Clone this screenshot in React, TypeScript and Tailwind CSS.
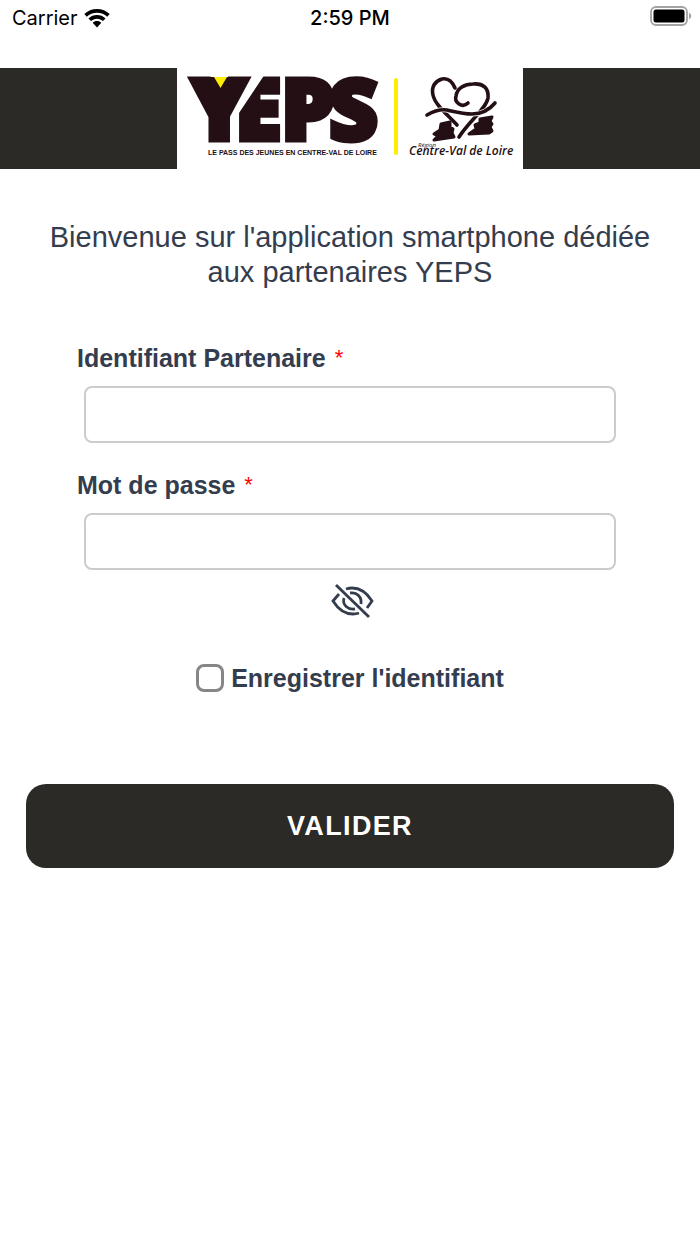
import { useState } from "react";

function WifiIcon() {
  return (
    <svg width="26" height="19" viewBox="0 0 26 19" aria-hidden="true">
      <path d="M13 0C8 0 3.600 1.900.3 5l2.500 2.700C5.500 5.200 9 3.700 13 3.700s7.500 1.500 10.200 4L25.700 5C22.400 1.900 18 0 13 0z" />
      <path d="M13 6.100c-3.300 0-6.200 1.200-8.500 3.300L7 12.100c1.600-1.500 3.700-2.400 6-2.400s4.400.9 6 2.400l2.500-2.700C19.200 7.300 16.300 6.100 13 6.100z" />
      <path d="M13 12.100c-1.700 0-3.200.6-4.300 1.700L13 18.500l4.300-4.700c-1.100-1.100-2.600-1.700-4.300-1.700z" />
    </svg>
  );
}

function BatteryIcon() {
  return (
    <svg width="42" height="20" viewBox="0 0 42 20" aria-hidden="true">
      <rect x="1" y="1" width="36" height="18" rx="5" fill="none" stroke="#a3a3a3" strokeWidth="1.800" />
      <rect x="3.500" y="3.500" width="31" height="13" rx="2.500" />
      <path d="M39 6.800c1.300.5 2.200 1.700 2.200 3.200s-.9 2.700-2.200 3.200z" fill="#a3a3a3" />
    </svg>
  );
}

function Logo() {
  return (
    <svg width="346" height="101" viewBox="0 0 346 101" role="img" aria-label="YEPS, Région Centre-Val de Loire" className="bg-white">
      {/* YEPS wordmark, the Y cuts into the E */}
      <g fill="#230f14" stroke="#230f14" strokeWidth="5" fontFamily="'Open Sans', sans-serif" fontWeight="800" fontSize="85">
        <text x="58" y="72">E</text>
        <text x="104" y="72">P</text>
        <text x="152" y="72">S</text>
        <path d="M42 6H88L60 48V78H42z" fill="#fff" stroke="none" />
        <text x="14" y="72">Y</text>
      </g>
      {/* yellow notch on top of the Y */}
      <path d="M28 9h31L45 36h-3z" fill="#230f14" />
      <path d="M37 9h13l-6.500 11z" fill="#ffed00" />
      <text x="31" y="87" fill="#230f14" fontFamily="'Liberation Sans', Arial, sans-serif" fontWeight="700" fontSize="7">
        LE PASS DES JEUNES EN CENTRE-VAL DE LOIRE
      </text>

      <path d="M219 12v73" stroke="#ffed00" strokeWidth="4" strokeLinecap="round" />

      {/* heart, river and banks */}
      <g fill="none" stroke="#230f14" strokeWidth="3.600" strokeLinecap="round" strokeLinejoin="round">
        <path d="M278 20C275 13 270 10 265 11C258 13 254 19 256 27C258 37 271 47 280 57" />
        <path d="M291 35C288 38 285 38 282 36C279 34 278 31 279 28C280 20 288 16 296 16C306 15 312 20 311 30C309 41 293 52 282 69" />
        <path d="M250 47C257 43 263 41 270 42C279 44 286 46 295 46C305 46 313 41 318 35" stroke="#fff" strokeWidth="5" strokeLinecap="butt" />
        <path d="M250 47C257 43 263 41 270 42C279 44 286 46 295 46C305 46 313 41 318 35" />
        <g fill="#230f14" strokeWidth="3">
          <path d="M264 56L273 54L273 59L276 61L275 65L277 69L257 72L261 68L257 66L263 62z" />
          <path d="M303 51L315 49L313 53L315 56L313 59L315 63L312 65L292 66L299 61L298 57L303 55z" />
        </g>
      </g>
      <g fill="#230f14" fontFamily="'Open Sans', sans-serif" fontStyle="italic">
        <text x="241" y="79" fontSize="6">Région</text>
        <text x="232" y="87" fontSize="12" fontWeight="600">Centre-Val de Loire</text>
      </g>
    </svg>
  );
}

function EyeOffIcon() {
  return (
    <svg width="44" height="36" viewBox="0 0 44 36" fill="none" stroke="#343d4e" strokeWidth="2.800" aria-hidden="true">
      <path d="M6 3l33 32" />
      <path d="M9 12L3 19c5 8 12 13 20 13 2 0 4-.3 6-1" />
      <path d="M16 7c2-.6 4-1 6-1 8 0 15 5 20 13l-5 7" />
      <path d="M14 16c-2 7 4 12 11 11" />
      <path d="M20 11c7-1 12 4 11 11" />
    </svg>
  );
}

type FieldProps = {
  id: string;
  label: string;
  type: string;
};

function Field({ id, label, type }: FieldProps) {
  return (
    <div>
      <label htmlFor={id} className="block text-[25px] leading-7 font-bold">
        {label} <span className="ml-0.5 align-[2px] text-[22px] leading-5 font-normal text-[#ff0000]">*</span>
      </label>
      <div className="mt-3.5 px-[7px]">
        <input
          id={id}
          type={type}
          required
          className="block h-[57px] w-full rounded-lg border-2 border-[#cccccc] bg-white px-3 text-2xl outline-none"
        />
      </div>
    </div>
  );
}

export default function App() {
  const [visible, setVisible] = useState(false);

  return (
    <div className="min-h-screen bg-white font-['Liberation_Sans',Arial,sans-serif] text-[#343d4e]">
      {/* Status bar */}
      <div className="grid h-[68px] grid-cols-3 items-start px-3 pt-1.5 font-[Inter,sans-serif] text-xl leading-6 text-black">
        <div className="flex items-center gap-1.5">
          <span>Carrier</span>
          <WifiIcon />
        </div>
        <span className="text-center font-medium">2:59 PM</span>
        <div className="-mr-1 flex justify-end">
          <BatteryIcon />
        </div>
      </div>

      <header className="flex justify-center bg-[#2b2a26]">
        <Logo />
      </header>

      <main>
        <h1 className="mx-auto mt-[51px] max-w-[640px] text-center text-[29px] leading-[35px]">
          Bienvenue sur l'application smartphone dédiée aux partenaires YEPS
        </h1>

        <form onSubmit={(e) => e.preventDefault()}>
          <div className="mx-[77px] mt-[54px] space-y-7">
            <Field id="identifiant" label="Identifiant Partenaire" type="text" />
            <Field id="password" label="Mot de passe" type={visible ? "text" : "password"} />
          </div>

          <div className="mt-3 flex justify-center pl-1">
            <button type="button" aria-label="Afficher le mot de passe" onClick={() => setVisible(!visible)}>
              <EyeOffIcon />
            </button>
          </div>

          <label className="mt-11 flex items-center justify-center gap-[7px] text-[25px] leading-8 font-bold">
            <input type="checkbox" className="size-7 appearance-none rounded-lg border-[3px] border-[#868686] bg-white checked:bg-[#2b2a26]" />
            Enregistrer l'identifiant
          </label>

          <div className="mt-[90px] px-[26px]">
            <button type="submit" className="h-[84px] w-full rounded-[20px] bg-[#2b2a26] text-[27px] font-bold tracking-wider text-white">
              VALIDER
            </button>
          </div>
        </form>
      </main>
    </div>
  );
}
